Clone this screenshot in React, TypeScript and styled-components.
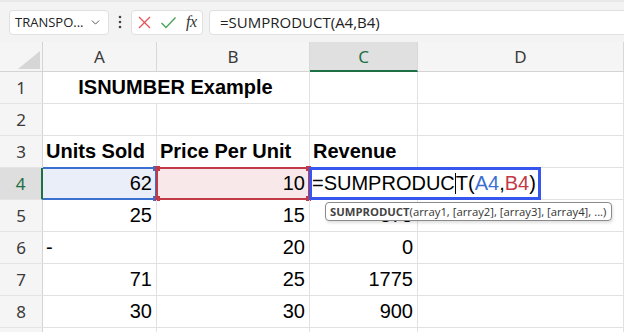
import React from 'react';
import styled, { createGlobalStyle, css } from 'styled-components';
import { ChevronDown } from 'lucide-react';

const GREEN = '#1d7044';
const GRID = '#e1e1e1';
const BLUE_REF = '#3b6fd0';
const RED_REF = '#c23a46';

const GlobalStyle = createGlobalStyle`
  html, body {
    margin: 0;
    padding: 0;
    background: #ffffff;
    overflow: hidden;
  }
`;

const Page = styled.div`
  width: 624px;
  height: 332px;
  overflow: hidden;
  display: flex;
  flex-direction: column;
  font-family: 'Liberation Sans', Arial, sans-serif;
`;

const Toolbar = styled.div`
  height: 42px;
  flex: none;
  display: flex;
  align-items: center;
  padding-left: 9px;
  background: #f3f3f3;
  border-top: 2px solid #e8e8e8;
  box-sizing: border-box;
`;

const NameBox = styled.div`
  width: 100px;
  height: 25px;
  box-sizing: border-box;
  background: #fff;
  border: 1px solid #e0e0e0;
  border-radius: 4px;
  display: flex;
  align-items: center;
  justify-content: space-between;
  padding: 0 6px 0 5px;
  font-family: 'Open Sans', sans-serif;
  font-size: 13px;
  color: #222;
`;

const Dots = styled.div`
  width: 22px;
  display: flex;
  justify-content: center;
`;

const IconBox = styled.div`
  width: 72px;
  height: 25px;
  box-sizing: border-box;
  background: #fff;
  border: 1px solid #e0e0e0;
  border-radius: 4px;
  display: flex;
  align-items: center;
  padding-left: 5px;
  gap: 8px;
`;

const Fx = styled.span`
  font-family: 'Liberation Serif', serif;
  font-style: italic;
  font-size: 16px;
  color: #333;
  margin-left: 1px;
  letter-spacing: -0.5px;
`;

const FormulaInput = styled.div`
  flex: 1;
  height: 25px;
  margin-left: 6px;
  margin-right: -8px;
  box-sizing: border-box;
  background: #fff;
  border: 1px solid #e0e0e0;
  border-radius: 4px;
  display: flex;
  align-items: center;
  padding-left: 10px;
  font-family: 'Open Sans', sans-serif;
  font-size: 15px;
  color: #222;
`;

const Sheet = styled.div`
  flex: 1;
  display: grid;
  grid-template-columns: 43px 114px 153px 108px 206px;
  grid-template-rows: 30px repeat(9, 32px);
  background: #fff;
`;

const Corner = styled.div`
  background: #f5f5f5;
  border-right: 1px solid #d4d4d4;
  border-bottom: 1px solid #d4d4d4;
  display: flex;
  align-items: flex-end;
  justify-content: flex-end;
  padding: 0 2px 2px 0;
`;

const ColHead = styled.div<{ $active?: boolean }>`
  background: ${({ $active }) => ($active ? '#e0e0e0' : '#f5f5f5')};
  color: ${({ $active }) => ($active ? GREEN : '#3a3a3a')};
  border-right: 1px solid #d8d8d8;
  border-bottom: ${({ $active }) => ($active ? `2px solid ${GREEN}` : '1px solid #d4d4d4')};
  display: flex;
  align-items: center;
  justify-content: center;
  font-family: 'Noto Sans', sans-serif;
  font-size: 17px;
`;

const RowHead = styled.div<{ $active?: boolean }>`
  background: ${({ $active }) => ($active ? '#dedede' : '#f5f5f5')};
  color: ${({ $active }) => ($active ? GREEN : '#3a3a3a')};
  border-right: ${({ $active }) => ($active ? `2px solid ${GREEN}` : '1px solid #d4d4d4')};
  border-bottom: 1px solid #e4e4e4;
  display: flex;
  align-items: center;
  justify-content: center;
  font-family: 'Noto Sans', sans-serif;
  font-size: 17px;
`;

const Cell = styled.div<{ $align?: 'left' | 'right' | 'center'; $bold?: boolean; $span?: number; $tint?: string }>`
  position: relative;
  border-right: 1px solid ${GRID};
  border-bottom: 1px solid ${GRID};
  display: flex;
  align-items: center;
  justify-content: ${({ $align }) =>
    $align === 'right' ? 'flex-end' : $align === 'center' ? 'center' : 'flex-start'};
  padding: 0 4px 0 3px;
  font-size: 20px;
  font-weight: ${({ $bold }) => ($bold ? 700 : 400)};
  color: #000;
  white-space: nowrap;
  background: ${({ $tint }) => $tint || 'transparent'};
  ${({ $span }) =>
    $span &&
    css`
      grid-column: span ${$span};
    `}
`;

const RefFrame = styled.div<{ $color: string; $noLeft?: boolean }>`
  position: absolute;
  left: ${({ $noLeft }) => ($noLeft ? '0' : '-1px')};
  top: -1px;
  right: -1px;
  bottom: -1px;
  border: 2px solid ${({ $color }) => $color};
  ${({ $noLeft }) => $noLeft && 'border-left: none;'}
  pointer-events: none;
`;

const Handle = styled.span<{ $color: string; $pos: 'tl' | 'tr' | 'bl' | 'br' }>`
  position: absolute;
  width: 5px;
  height: 5px;
  background: ${({ $color }) => $color};
  ${({ $pos }) => ($pos[0] === 't' ? 'top: -3px;' : 'bottom: -3px;')}
  ${({ $pos }) => ($pos[1] === 'l' ? 'left: -3px;' : 'right: -3px;')}
`;

const EditBox = styled.div`
  position: absolute;
  left: -1px;
  top: -1px;
  width: 232px;
  height: 33px;
  box-sizing: border-box;
  border: 3px solid #3656ee;
  background: #fff;
  z-index: 2;
  display: flex;
  align-items: center;
  padding-left: 0;
  font-size: 20px;
  color: #000;
`;

const Caret = styled.span`
  display: inline-block;
  width: 1px;
  height: 21px;
  background: #000;
`;

const RefText = styled.span<{ $color: string }>`
  color: ${({ $color }) => $color};
`;

const Tip = styled.div`
  position: absolute;
  left: 15px;
  top: 34px;
  height: 19px;
  box-sizing: border-box;
  padding: 0 5px 0 4px;
  background: #fff;
  border: 1px solid #8a8a8a;
  border-radius: 4px;
  box-shadow: 1px 2px 3px rgba(0, 0, 0, 0.12);
  z-index: 3;
  display: flex;
  align-items: center;
  font-family: 'Open Sans', sans-serif;
  font-size: 11.3px;
  font-weight: 400;
  color: #333;
  b {
    font-weight: 700;
    color: #444;
  }
`;

type Row = { a?: string; b?: string; c?: string; aLeft?: boolean };

const rows: Row[] = [
  { a: '25', b: '15', c: '375' },
  { a: '-', b: '20', c: '0', aLeft: true },
  { a: '71', b: '25', c: '1775' },
  { a: '30', b: '30', c: '900' },
];

const Frame = ({ color, noLeft }: { color: string; noLeft?: boolean }) => (
  <RefFrame $color={color} $noLeft={noLeft}>
    {!noLeft && <Handle $color={color} $pos="tl" />}
    {!noLeft && <Handle $color={color} $pos="bl" />}
    <Handle $color={color} $pos="tr" />
    <Handle $color={color} $pos="br" />
  </RefFrame>
);

const App: React.FC = () => {
  return (
    <Page>
      <GlobalStyle />
      <Toolbar>
        <NameBox>
          <span>TRANSPO...</span>
          <ChevronDown size={13} color="#555" strokeWidth={1.8} />
        </NameBox>
        <Dots>
          <svg width="4" height="14" viewBox="0 0 4 14">
            <circle cx="2" cy="2" r="1.3" fill="#444" />
            <circle cx="2" cy="7" r="1.3" fill="#444" />
            <circle cx="2" cy="12" r="1.3" fill="#444" />
          </svg>
        </Dots>
        <IconBox>
          <svg width="15" height="15" viewBox="0 0 15 15">
            <path d="M2 2 L13 13 M13 2 L2 13" stroke="#e0585a" strokeWidth="1.4" fill="none" />
          </svg>
          <svg width="17" height="15" viewBox="0 0 17 15">
            <path d="M1.5 8 L6 12.5 L15.5 2.5" stroke="#4aa35a" strokeWidth="1.4" fill="none" />
          </svg>
          <Fx>fx</Fx>
        </IconBox>
        <FormulaInput>=SUMPRODUCT(A4,B4)</FormulaInput>
      </Toolbar>

      <Sheet>
        <Corner>
          <svg width="22" height="18" viewBox="0 0 22 18">
            <polygon points="22,0 22,18 0,18" fill="#d6d6d6" />
          </svg>
        </Corner>
        <ColHead>A</ColHead>
        <ColHead>B</ColHead>
        <ColHead $active>C</ColHead>
        <ColHead>D</ColHead>

        <RowHead>1</RowHead>
        <Cell $span={2} $align="center" $bold>
          ISNUMBER Example
        </Cell>
        <Cell />
        <Cell />

        <RowHead>2</RowHead>
        <Cell />
        <Cell />
        <Cell />
        <Cell />

        <RowHead>3</RowHead>
        <Cell $bold>Units Sold</Cell>
        <Cell $bold>Price Per Unit</Cell>
        <Cell $bold>Revenue</Cell>
        <Cell />

        <RowHead $active>4</RowHead>
        <Cell $align="right" $tint="#e9eef8">
          62
          <Frame color={BLUE_REF} noLeft />
        </Cell>
        <Cell $align="right" $tint="#f9e8ea">
          10
          <Frame color={RED_REF} />
        </Cell>
        <Cell>
          <EditBox>
            =SUMPRODUC
            <Caret />
            T(
            <RefText $color={BLUE_REF}>A4</RefText>,<RefText $color={RED_REF}>B4</RefText>)
          </EditBox>
          <Tip>
            <b>SUMPRODUCT</b>(array1, [array2], [array3], [array4], ...)
          </Tip>
        </Cell>
        <Cell />

        {rows.map((r, i) => (
          <React.Fragment key={i}>
            <RowHead>{i + 5}</RowHead>
            <Cell $align={r.aLeft ? 'left' : 'right'}>{r.a}</Cell>
            <Cell $align="right">{r.b}</Cell>
            <Cell $align="right">{r.c}</Cell>
            <Cell />
          </React.Fragment>
        ))}

        <RowHead />
        <Cell />
        <Cell />
        <Cell />
        <Cell />
      </Sheet>
    </Page>
  );
};

export default App;
